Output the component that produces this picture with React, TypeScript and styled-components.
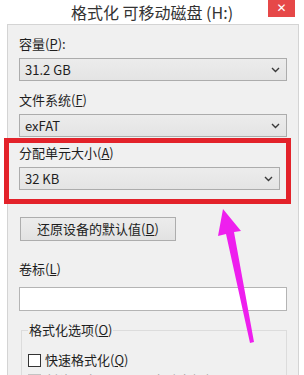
import React from "react";
import styled, { createGlobalStyle } from "styled-components";

const Global = createGlobalStyle`
  html, body { margin: 0; padding: 0; background: #ffffff; }
  * { box-sizing: border-box; }
`;

const FONT = `"Noto Sans CJK SC", "Noto Sans", sans-serif`;

const Window = styled.div`
  position: relative;
  width: 304px;
  height: 375px;
  overflow: hidden;
  background: #ffffff;
  font-family: ${FONT};
  display: flex;
  flex-direction: column;
`;

const TitleBar = styled.div`
  height: 24px;
  display: grid;
  grid-template-columns: 1fr auto 1fr;
  align-items: start;
  flex-shrink: 0;
`;

const Title = styled.div`
  grid-column: 2;
  font-size: 16px;
  line-height: 24px;
  color: #333333;
  white-space: nowrap;
`;

const CloseButton = styled.div`
  grid-column: 3;
  justify-self: end;
  margin-right: 9px;
  width: 27px;
  height: 17px;
  background: #e64848;
  color: #ffffff;
  font-family: "DejaVu Sans", sans-serif;
  font-size: 12px;
  font-weight: bold;
  line-height: 17px;
  text-align: center;
`;

const Body = styled.div`
  flex: 1;
  margin: 0 5px 0 7px;
  border: 1px solid #d4d4d4;
  border-bottom: none;
  background: #f0f0f0;
  padding: 10px 11px 0 11px;
  display: flex;
  flex-direction: column;
`;

const Label = styled.div<{ $gap?: number }>`
  font-size: 13px;
  line-height: 18px;
  color: #1e1e1e;
  margin-bottom: ${(p) => p.$gap ?? 5}px;
  u { text-decoration: underline; text-underline-offset: 1px; }
`;

const Field = styled.div<{ $top?: number }>`
  display: flex;
  flex-direction: column;
  margin-top: ${(p) => p.$top ?? 0}px;
`;

const Combo = styled.div`
  height: 23px;
  border: 1px solid #acacac;
  background: linear-gradient(#ececec, #e4e4e4);
  display: flex;
  align-items: center;
  justify-content: space-between;
  padding: 0 6px 0 5px;
  font-size: 13px;
  color: #1e1e1e;
`;

const Highlight = styled.div`
  margin: 1px -4px 0 -15px;
  border: 5px solid #e3222a;
  padding: 1px 6px 9px 10px;
  display: flex;
  flex-direction: column;
`;

const ResetButton = styled.div`
  margin-top: 13px;
  width: 156px;
  height: 24px;
  margin-left: 1px;
  border: 1px solid #adadad;
  background: linear-gradient(#ececec, #e2e2e2);
  font-size: 13px;
  line-height: 22px;
  text-align: center;
  color: #1e1e1e;
  u { text-decoration: underline; text-underline-offset: 1px; }
`;

const TextInput = styled.div`
  height: 24px;
  border: 1px solid #b4b4b4;
  background: #ffffff;
`;

const Group = styled.fieldset`
  margin: 10px 0 0 2px;
  border: 1px solid #dcdcdc;
  border-bottom: none;
  padding: 12px 6px 0 6px;
  min-width: 0;
  display: flex;
  flex-direction: column;
  gap: 2px;
`;

const Legend = styled.legend`
  font-size: 13px;
  line-height: 18px;
  color: #1e1e1e;
  padding: 0 1px;
  u { text-decoration: underline; text-underline-offset: 1px; }
`;

const CheckRow = styled.div<{ $disabled?: boolean }>`
  display: flex;
  align-items: center;
  gap: 4px;
  font-size: 13px;
  line-height: 18px;
  color: ${(p) => (p.$disabled ? "#a3a3a3" : "#1e1e1e")};
  white-space: nowrap;
  u { text-decoration: underline; text-underline-offset: 1px; }
`;

const Box = styled.span<{ $disabled?: boolean }>`
  width: 13px;
  height: 13px;
  border: 1px solid ${(p) => (p.$disabled ? "#c4c4c4" : "#333333")};
  background: ${(p) => (p.$disabled ? "#f4f4f4" : "#ffffff")};
  flex-shrink: 0;
`;

const Overlay = styled.svg`
  position: absolute;
  left: 0;
  top: 0;
  pointer-events: none;
`;

const Chevron = () => (
  <svg width="9" height="6" viewBox="0 0 9 6">
    <path d="M1 1 L4.5 4.5 L8 1" fill="none" stroke="#3a3a3a" strokeWidth="1.4" />
  </svg>
);

const ComboBox = ({ value }: { value: string }) => (
  <Combo>
    <span>{value}</span>
    <Chevron />
  </Combo>
);

export default function App() {
  return (
    <>
      <Global />
      <Window>
        <TitleBar>
          <Title>格式化 可移动磁盘 (H:)</Title>
          <CloseButton>✕</CloseButton>
        </TitleBar>
        <Body>
          <Field>
            <Label>
              容量(<u>P</u>):
            </Label>
            <ComboBox value="31.2 GB" />
          </Field>
          <Field $top={10}>
            <Label>
              文件系统(<u>F</u>)
            </Label>
            <ComboBox value="exFAT" />
          </Field>
          <Highlight>
            <Label>
              分配单元大小(<u>A</u>)
            </Label>
            <ComboBox value="32 KB" />
          </Highlight>
          <ResetButton>
            还原设备的默认值(<u>D</u>)
          </ResetButton>
          <Field $top={19}>
            <Label $gap={9}>
              卷标(<u>L</u>)
            </Label>
            <TextInput />
          </Field>
          <Group>
            <Legend>
              格式化选项(<u>O</u>)
            </Legend>
            <CheckRow>
              <Box />
              <span>
                快速格式化(<u>Q</u>)
              </span>
            </CheckRow>
            <CheckRow $disabled>
              <Box $disabled />
              <span>
                创建一个 MS-DOS 启动盘(<u>M</u>)
              </span>
            </CheckRow>
          </Group>
        </Body>
        <Overlay width="304" height="375" viewBox="0 0 304 375">
          <polygon
            points="223,209 241,231 234,232 254,342 250,343 226,234 218,236"
            fill="#ee1fee"
          />
        </Overlay>
      </Window>
    </>
  );
}
